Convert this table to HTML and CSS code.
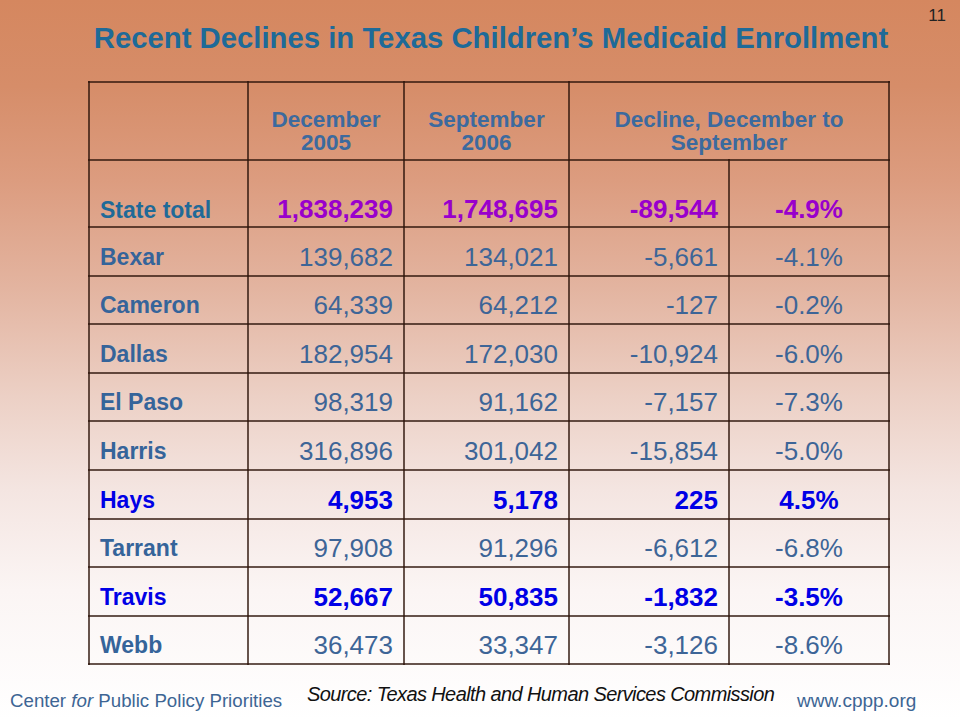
FILE: index.html
```html
<!DOCTYPE html>
<html lang="en">
<head>
<meta charset="utf-8">
<title>Recent Declines in Texas Children's Medicaid Enrollment</title>
<link rel="stylesheet" href="styles.css">
</head>
<body>
<div class="slide">
  <header class="top">
    <h1 class="title">Recent Declines in Texas Children’s Medicaid Enrollment</h1>
    <span class="page-num">11</span>
  </header>
  <table class="data">
    <colgroup>
      <col class="c-label"><col class="c-dec"><col class="c-sep"><col class="c-num"><col class="c-pct">
    </colgroup>
    <thead>
      <tr class="head-row">
        <th></th>
        <th>December<br>2005</th>
        <th>September<br>2006</th>
        <th colspan="2">Decline, December to<br>September</th>
      </tr>
    </thead>
    <tbody>
      <tr class="total">
        <td class="label">State total</td><td>1,838,239</td><td>1,748,695</td><td>-89,544</td><td class="pct">-4.9%</td>
      </tr>
      <tr><td class="label">Bexar</td><td>139,682</td><td>134,021</td><td>-5,661</td><td class="pct">-4.1%</td></tr>
      <tr><td class="label">Cameron</td><td>64,339</td><td>64,212</td><td>-127</td><td class="pct">-0.2%</td></tr>
      <tr><td class="label">Dallas</td><td>182,954</td><td>172,030</td><td>-10,924</td><td class="pct">-6.0%</td></tr>
      <tr><td class="label">El Paso</td><td>98,319</td><td>91,162</td><td>-7,157</td><td class="pct">-7.3%</td></tr>
      <tr><td class="label">Harris</td><td>316,896</td><td>301,042</td><td>-15,854</td><td class="pct">-5.0%</td></tr>
      <tr class="hl"><td class="label">Hays</td><td>4,953</td><td>5,178</td><td>225</td><td class="pct">4.5%</td></tr>
      <tr><td class="label">Tarrant</td><td>97,908</td><td>91,296</td><td>-6,612</td><td class="pct">-6.8%</td></tr>
      <tr class="hl"><td class="label">Travis</td><td>52,667</td><td>50,835</td><td>-1,832</td><td class="pct">-3.5%</td></tr>
      <tr><td class="label">Webb</td><td>36,473</td><td>33,347</td><td>-3,126</td><td class="pct">-8.6%</td></tr>
    </tbody>
  </table>
  <footer class="foot">
    <span class="org">Center <i>for</i> Public Policy Priorities</span>
    <span class="source">Source: Texas Health and Human Services Commission<u class="blank"> </u></span>
    <span class="site">www.cppp.org</span>
  </footer>
</div>
</body>
</html>
```
FILE: styles.css
```css
html, body {
  margin: 0;
  padding: 0;
}
body {
  width: 960px;
  height: 720px;
  overflow: hidden;
}
.slide {
  width: 960px;
  height: 720px;
  display: flex;
  flex-direction: column;
  font-family: "Liberation Sans", Arial, sans-serif;
  background: linear-gradient(to bottom,
    #d5875f 0%,
    #d68d69 12%,
    #dc9c7f 25%,
    #e3b4a0 40%,
    #ecd0c5 55%,
    #f4e5e1 68%,
    #fbf5f4 82%,
    #ffffff 100%);
}
.top {
  flex: 0 0 81px;
  height: 81px;
  display: flex;
  align-items: flex-start;
  padding-left: 88px;
  box-sizing: border-box;
}
.title {
  margin: 0;
  width: 806px;
  flex: 0 0 806px;
  padding-top: 20px;
  white-space: nowrap;
  text-align: center;
  font-size: 29.3px;
  line-height: 36px;
  font-weight: bold;
  color: #1e6a98;
}
.page-num {
  margin-left: auto;
  margin-right: 14px;
  padding-top: 7px;
  font-size: 17px;
  line-height: 18px;
  color: #222;
}
.data {
  flex: 0 0 auto;
  margin-left: 88px;
  width: 800px;
  table-layout: fixed;
  border-collapse: collapse;
}
.c-label { width: 159px; }
.c-dec { width: 156px; }
.c-sep { width: 165px; }
.c-num { width: 160px; }
.c-pct { width: 160px; }
.data th,
.data td {
  border: 2px solid rgba(45, 20, 10, 0.72);
  padding: 0 10px 4px 10px;
  vertical-align: bottom;
}
.data tr {
  height: 48.6px;
}
.data tr.head-row {
  height: 78px;
}
.data tr.total {
  height: 67px;
}
.data th {
  font-size: 22.5px;
  line-height: 23px;
  font-weight: bold;
  color: #3c6a9e;
  text-align: center;
  padding-bottom: 5px;
}
.data td {
  font-size: 26px;
  line-height: 28px;
  text-align: right;
  color: #3d6597;
}
.data td.label {
  text-align: left;
  font-size: 23px;
  font-weight: bold;
  color: #35649a;
  padding-bottom: 4px;
}
.data td.pct {
  text-align: center;
}
.total td {
  font-weight: bold;
  color: #9900cc;
  padding-bottom: 3px;
}
.total td.label {
  color: #1f6a98;
  padding-bottom: 2px;
}
.hl td,
.hl td.label {
  font-weight: bold;
  color: #0000e6;
}
.foot {
  flex: 1;
  display: flex;
  align-items: flex-start;
  padding-left: 10px;
  box-sizing: border-box;
}
.org {
  padding-top: 25px;
  font-size: 18.7px;
  line-height: 22px;
  color: #3d6594;
  width: 297px;
}
.source {
  padding-top: 18px;
  font-size: 20px;
  line-height: 22px;
  font-style: italic;
  color: #111;
  letter-spacing: -0.6px;
  width: 490px;
}
.blank {
  font-size: 8px;
}
.site {
  padding-top: 25px;
  font-size: 19px;
  line-height: 22px;
  color: #3d6594;
}
```
